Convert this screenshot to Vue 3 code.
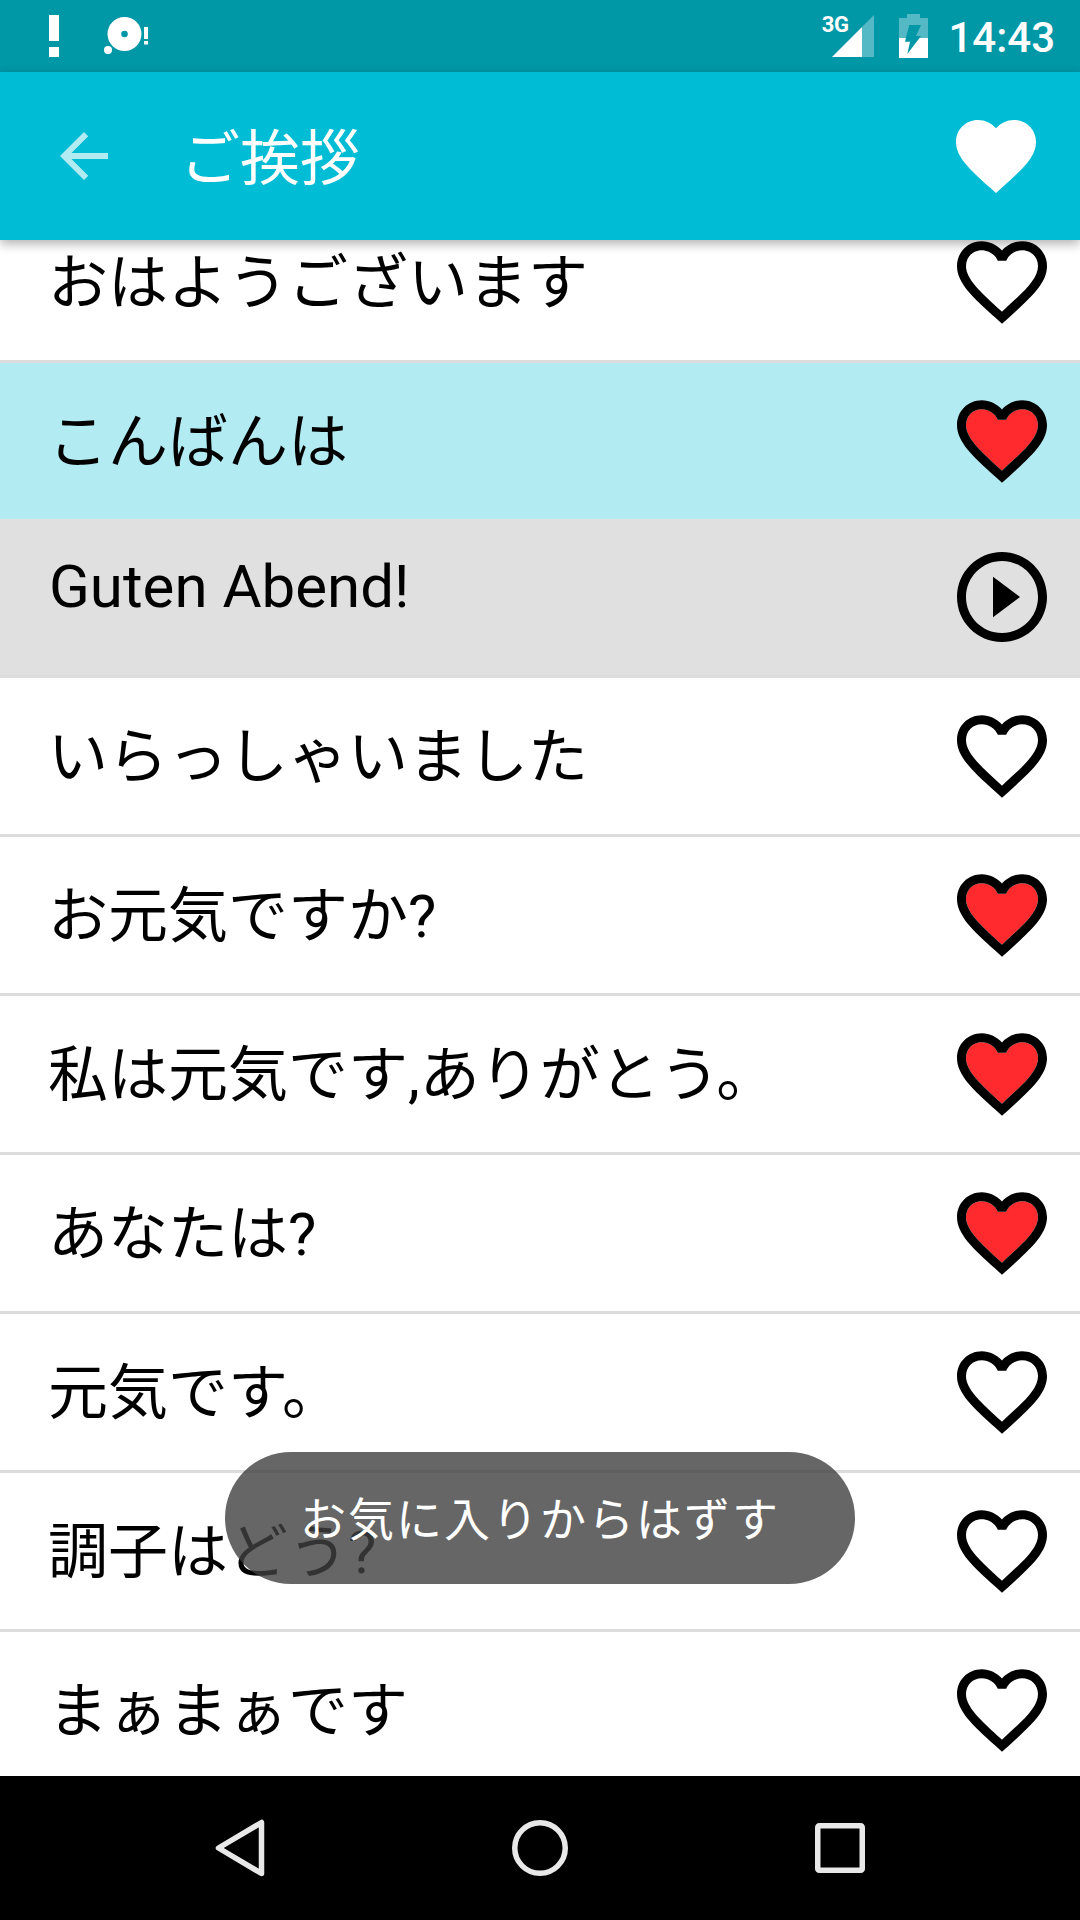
<script setup>
const rows = [
  { text: 'おはようございます', icon: 'empty', cls: '' },
  { text: 'こんばんは', icon: 'full', cls: 'picked' },
  { text: 'Guten Abend!', icon: 'play', cls: 'translation' },
  { text: 'いらっしゃいました', icon: 'empty', cls: '' },
  { text: 'お元気ですか?', icon: 'full', cls: '' },
  { text: '私は元気です,ありがとう。', icon: 'full', cls: '' },
  { text: 'あなたは?', icon: 'full', cls: '' },
  { text: '元気です。', icon: 'empty', cls: '' },
  { text: '調子はどう?', icon: 'empty', cls: '' },
  { text: 'まぁまぁです', icon: 'empty', cls: '' }
]
const heart = 'M12 21.35l-1.45-1.32C5.4 15.36 2 12.28 2 8.5 2 5.42 4.42 3 7.5 3c1.74 0 3.41.81 4.5 2.09C13.09 3.81 14.76 3 16.5 3 19.58 3 22 5.42 22 8.5c0 3.78-3.4 6.86-8.55 11.54L12 21.35z'
const heartInner = 'M12.1 18.55l-.1.1-.1-.1C7.14 14.24 4 11.39 4 8.5 4 6.5 5.5 5 7.5 5c1.54 0 3.04.99 3.57 2.36h1.87C13.46 5.99 14.96 5 16.5 5c2 0 3.5 1.5 3.5 3.5 0 2.89-3.14 5.74-7.9 10.05z'
const ring = heart + heartInner
</script>

<template>
  <div class="screen">
    <div class="status">
      <div class="status-left">
        <svg width="10" height="42" viewBox="0 0 10 42"><rect width="10" height="26"/><rect y="32" width="10" height="10"/></svg>
        <svg width="50" height="42" viewBox="0 0 50 42">
          <path fill-rule="evenodd" d="M24.500 2a17 17 0 1 1 0 34a17 17 0 1 1 0-34zM24.500 15.700a3.300 3.300 0 1 0 0 6.600a3.300 3.300 0 1 0 0-6.600z"/>
          <circle cx="8" cy="35" r="4"/>
          <rect x="44" y="12" width="4" height="12"/><rect x="44" y="26" width="4" height="3.500"/>
        </svg>
      </div>
      <div class="status-right">
        <span class="net">3G</span>
        <svg class="signal" width="42" height="42" viewBox="0 0 42 42"><path d="M30 12L42 0V42H30z" opacity=".33"/><path d="M30 12V42H0z"/></svg>
        <svg class="battery" width="29" height="44" viewBox="0 0 29 44">
          <path fill-rule="evenodd" d="M8 0h13v4h8v20H0V4h8zM10.300 11H22l-5 11h5l-1.500 2H6.900z" opacity=".33"/>
          <path fill-rule="evenodd" d="M0 24H29V44H0zM6.900 24H20.500L8.300 40 11 27.700H6z"/>
        </svg>
        <span class="clock">14:43</span>
      </div>
    </div>

    <header class="appbar">
      <svg class="back" width="72" height="72" viewBox="0 0 24 24"><path d="M20 11H7.830l5.590-5.590L12 4l-8 8 8 8 1.410-1.410L7.830 13H20v-2z"/></svg>
      <h1 class="title">ご挨拶</h1>
      <svg class="top-heart" width="80" height="73" viewBox="2 3 20 18.350" preserveAspectRatio="none"><path :d="heart"/></svg>
    </header>

    <main class="list">
      <div class="track">
        <div v-for="row in rows" :key="row.text" class="row" :class="row.cls">
          <span class="label">{{ row.text }}</span>
          <svg v-if="row.icon === 'play'" class="icon" width="90" height="90" viewBox="2 2 20 20">
            <path d="M10 16.500l6-4.500-6-4.500v9zM12 2C6.480 2 2 6.480 2 12s4.480 10 10 10 10-4.480 10-10S17.520 2 12 2zm0 18c-4.410 0-8-3.590-8-8s3.590-8 8-8 8 3.590 8 8-3.590 8-8 8z"/>
          </svg>
          <svg v-else class="icon" width="90" height="83" viewBox="2 3 20 18.350">
            <path v-if="row.icon === 'full'" :d="heartInner" fill="#ff2a2d"/>
            <path :d="ring" fill-rule="evenodd"/>
          </svg>
        </div>
      </div>
      <div class="toast">お気に入りからはずす</div>
    </main>

    <nav class="navbar">
      <svg width="50" height="58" viewBox="0 0 50 58"><path d="M46.500 3.500v51L3.500 29z" fill="none" stroke="#e8e8e8" stroke-width="5.500" stroke-linejoin="round"/></svg>
      <svg width="56" height="56" viewBox="0 0 56 56"><circle cx="28" cy="28" r="25.250" fill="none" stroke="#e8e8e8" stroke-width="5.500"/></svg>
      <svg width="50" height="50" viewBox="0 0 50 50"><rect x="2.750" y="2.750" width="44.500" height="44.500" rx="1.500" fill="none" stroke="#e8e8e8" stroke-width="5.500"/></svg>
    </nav>
  </div>
</template>

<style scoped>
.screen {
  width: 1080px;
  height: 1920px;
  display: flex;
  flex-direction: column;
  overflow: hidden;
  background: #fff;
  font-family: "Roboto", "Noto Sans CJK JP", sans-serif;
  color: #000;
}
.status {
  height: 72px;
  flex: none;
  background: #0097a7;
  display: flex;
  justify-content: space-between;
  align-items: flex-start;
  padding: 0 25px 0 49px;
  box-sizing: border-box;
}
.status svg { fill: #fff; flex: none; }
.status-left { display: flex; align-items: flex-start; gap: 41px; padding-top: 15px; }
.status-right { display: flex; align-items: flex-start; padding-top: 15px; }
.net { color: #fff; font-size: 22px; font-weight: 700; line-height: 20px; letter-spacing: -.5px; margin: 0 -16px 0 0; position: relative; }
.battery { margin: -1px 0 0 25px; }
.clock { color: #fff; font-size: 42px; font-weight: 500; line-height: 44px; margin: 1px 0 0 20px; }
.appbar {
  height: 168px;
  flex: none;
  background: #00bcd4;
  display: flex;
  align-items: center;
  padding: 0 44px 0 48px;
  box-sizing: border-box;
  box-shadow: 0 4px 10px rgba(0, 0, 0, .3);
  position: relative;
  z-index: 2;
}
.back { fill: #b2ebf2; flex: none; }
.title { margin: 8px 0 0 60px; flex: 1; font-size: 60px; font-weight: 400; color: #fff; line-height: 1; }
.top-heart { fill: #fff; flex: none; margin-top: 1px; }
.list { flex: 1; position: relative; overflow: hidden; }
.track { margin-top: -36px; }
.row {
  height: 159px;
  box-sizing: border-box;
  border-bottom: 3px solid #dcdcdc;
  display: flex;
  align-items: center;
  justify-content: space-between;
  padding: 0 33px 0 48px;
  font-size: 60px;
  line-height: 1;
}
.label { margin-top: 3px; }
.picked { background: #b2ebf2; border-bottom: 0; height: 156px; }
.translation { background: #e0e0e0; }
.translation .label { margin-top: -20px; margin-left: 1px; }
.icon { flex: none; }
.toast {
  position: absolute;
  left: 225px;
  top: 1212px;
  width: 630px;
  height: 132px;
  border-radius: 66px;
  background: rgba(64, 64, 64, .8);
  color: #fff;
  font-size: 46px;
  letter-spacing: 2px;
  display: flex;
  align-items: center;
  justify-content: center;
  padding-bottom: 4px;
  box-sizing: border-box;
}
.navbar {
  height: 144px;
  flex: none;
  background: #000;
  display: grid;
  grid-template-columns: repeat(3, 300px);
  justify-content: center;
  justify-items: center;
  align-items: center;
}
</style>
